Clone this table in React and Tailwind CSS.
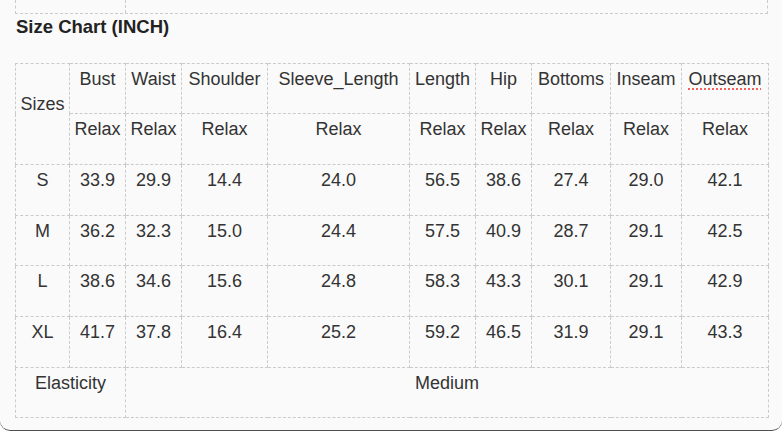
const cols = [54, 56, 56, 86, 142, 66, 56, 79, 71, 87];

const heads = ["Bust", "Waist", "Shoulder", "Sleeve_Length", "Length", "Hip", "Bottoms", "Inseam", "Outseam"];

const rows = [
  ["S", "33.9", "29.9", "14.4", "24.0", "56.5", "38.6", "27.4", "29.0", "42.1"],
  ["M", "36.2", "32.3", "15.0", "24.4", "57.5", "40.9", "28.7", "29.1", "42.5"],
  ["L", "38.6", "34.6", "15.6", "24.8", "58.3", "43.3", "30.1", "29.1", "42.9"],
  ["XL", "41.7", "37.8", "16.4", "25.2", "59.2", "46.5", "31.9", "29.1", "43.3"],
];

const cell = "border border-dashed border-[#cbcbcb] align-top text-center pt-[5px] px-0 font-normal";

export default function App() {
  return (
    <div className="w-[782px] h-[432px] bg-white" style={{ fontFamily: '"Liberation Sans", Arial, sans-serif' }}>
      <div className="h-[431px] bg-[#fafafa] border-b border-[#505050] rounded-b-[10px] px-[15px] text-[#333]">
        {/* tail of the previous table */}
        <div className="flex h-[14px] w-[753px] border-x border-b border-dashed border-[#cbcbcb]">
          <div className="w-[110px] border-r border-dashed border-[#cbcbcb]"></div>
        </div>

        <h2 className="mt-[2px] ml-[1px] text-[18.5px] leading-[21px] font-bold text-[#222]">Size Chart (INCH)</h2>

        <table className="mt-[26px] w-[753px] table-fixed border-collapse text-[18px] leading-[21px]">
          <colgroup>
            {cols.map((w, i) => (
              <col key={i} style={{ width: w }} />
            ))}
          </colgroup>
          <tbody>
            <tr className="h-[50px]">
              <th rowSpan={2} className="border border-dashed border-[#cbcbcb] align-middle text-center pb-[20px] font-normal">
                Sizes
              </th>
              {heads.map((h) => (
                <th key={h} className={cell}>
                  {h === "Outseam" ? (
                    <span className="underline decoration-dotted decoration-[#f26060] decoration-2 underline-offset-[3px]">{h}</span>
                  ) : (
                    h
                  )}
                </th>
              ))}
            </tr>
            <tr className="h-[51px]">
              {heads.map((h) => (
                <td key={h} className={cell}>Relax</td>
              ))}
            </tr>
            {rows.map((r, i) => (
              <tr key={r[0]} className={i === 1 ? "h-[50px]" : "h-[51px]"}>
                {r.map((v, j) => (
                  <td key={j} className={cell}>{v}</td>
                ))}
              </tr>
            ))}
            <tr className="h-[50px]">
              <td colSpan={2} className={cell}>Elasticity</td>
              <td colSpan={8} className={cell}>Medium</td>
            </tr>
          </tbody>
        </table>
      </div>
    </div>
  );
}
